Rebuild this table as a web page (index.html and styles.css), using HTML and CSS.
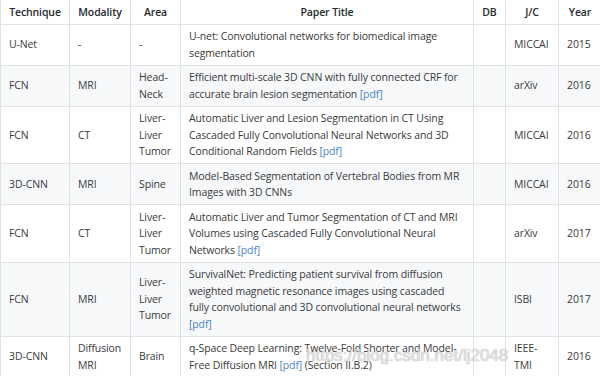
FILE: index.html
```html
<!DOCTYPE html>
<html>
<head>
<meta charset="utf-8">
<link rel="stylesheet" href="styles.css">
</head>
<body>
<div class="page">
<table class="papers">
<colgroup>
<col class="c-tech"><col class="c-mod"><col class="c-area"><col class="c-title"><col class="c-db"><col class="c-jc"><col class="c-year">
</colgroup>
<thead>
<tr><th>Technique</th><th>Modality</th><th>Area</th><th>Paper Title</th><th>DB</th><th>J/C</th><th>Year</th></tr>
</thead>
<tbody>
<tr><td>U-Net</td><td>-</td><td>-</td><td>U-net: Convolutional networks for biomedical image segmentation</td><td></td><td>MICCAI</td><td>2015</td></tr>
<tr><td>FCN</td><td>MRI</td><td>Head-Neck</td><td>Efficient multi-scale 3D CNN with fully connected CRF for accurate brain lesion segmentation <a href="#">[pdf]</a></td><td></td><td>arXiv</td><td>2016</td></tr>
<tr><td>FCN</td><td>CT</td><td>Liver-Liver Tumor</td><td>Automatic Liver and Lesion Segmentation in CT Using Cascaded Fully Convolutional Neural Networks and 3D Conditional Random Fields <a href="#">[pdf]</a></td><td></td><td>MICCAI</td><td>2016</td></tr>
<tr><td>3D-CNN</td><td>MRI</td><td>Spine</td><td>Model-Based Segmentation of Vertebral Bodies from MR Images with 3D CNNs</td><td></td><td>MICCAI</td><td>2016</td></tr>
<tr><td>FCN</td><td>CT</td><td>Liver-Liver Tumor</td><td>Automatic Liver and Tumor Segmentation of CT and MRI Volumes using Cascaded Fully Convolutional Neural Networks <a href="#">[pdf]</a></td><td></td><td>arXiv</td><td>2017</td></tr>
<tr><td>FCN</td><td>MRI</td><td>Liver-Liver Tumor</td><td>SurvivalNet: Predicting patient survival from diffusion weighted magnetic resonance images using cascaded fully convolutional and 3D convolutional neural networks <a href="#">[pdf]</a></td><td></td><td>ISBI</td><td>2017</td></tr>
<tr><td>3D-CNN</td><td>Diffusion MRI</td><td>Brain</td><td>q-Space Deep Learning: Twelve-Fold Shorter and Model-Free Diffusion MRI <a href="#">[pdf]</a> (Section II.B.2)</td><td></td><td>IEEE-TMI</td><td>2016</td></tr>
</tbody>
</table>
<div class="watermark">https://blog.csdn.net/lj2048</div>
</div>
</body>
</html>
```
FILE: styles.css
```css
html, body {
  margin: 0;
  padding: 0;
  background: #fff;
}
.page {
  position: relative;
  width: 600px;
  height: 376px;
  overflow: hidden;
}
.papers {
  border-collapse: collapse;
  table-layout: fixed;
  width: 601px;
  margin-top: -1px;
  font-family: "Open Sans", "Noto Sans", sans-serif;
  font-size: 10.5px;
  letter-spacing: -0.12px;
  line-height: 16.5px;
  color: #3a3a3a;
}
.c-tech { width: 69px; }
.c-mod { width: 61px; }
.c-area { width: 50px; }
.c-title { width: 293px; }
.c-db { width: 32px; }
.c-jc { width: 53px; }
.c-year { width: 43px; }
.papers th, .papers td {
  border: 1px solid #dfe2e5;
  padding: 3.5px 8px;
  vertical-align: middle;
}
.papers th {
  font-weight: 600;
  color: #24292e;
  text-align: center;
}
.papers td {
  text-align: left;
}
.papers tbody tr:nth-child(2n) {
  background: #f6f8fa;
}
.papers a {
  color: #4a86c5;
  text-decoration: none;
}
.watermark {
  position: absolute;
  left: 306px;
  top: 346px;
  font-family: "Liberation Sans", Arial, sans-serif;
  font-size: 17px;
  color: rgba(255, 255, 255, 0.7);
  text-shadow: 0 0 1px rgba(110, 110, 110, 0.8);
  white-space: nowrap;
}
```
